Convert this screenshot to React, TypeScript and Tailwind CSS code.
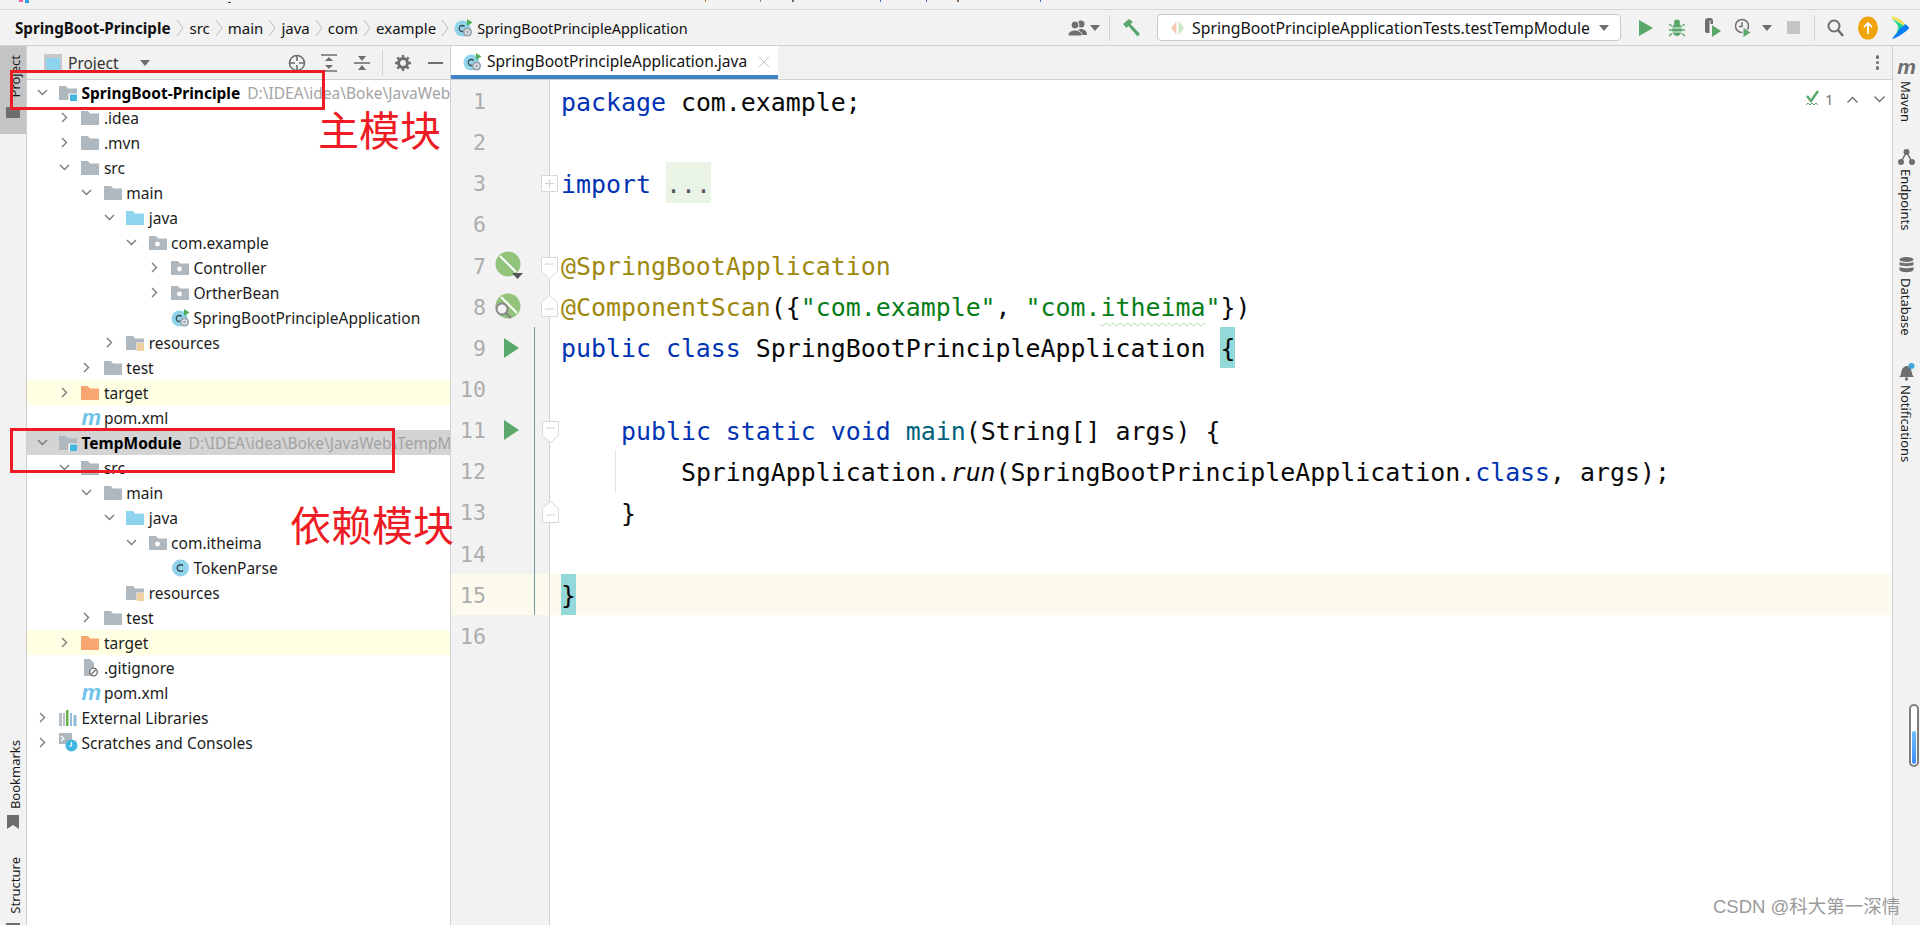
import type { ReactNode } from "react";

const uiFont = "font-['Noto_Sans','Noto_Sans_CJK_SC',sans-serif]";
const monoFont = "font-['DejaVu_Sans_Mono',monospace]";

function Folder({ color = "#afb8bf", children }: { color?: string; children?: ReactNode }) {
  return (
    <svg width="18" height="16" viewBox="0 0 18 16" className="shrink-0">
      <path d="M0 1h7l2 2.5h9V15H0z" fill={color} />
      {children}
    </svg>
  );
}

const ModuleFolder = () => (
  <Folder>
    <rect x="9.5" y="8.5" width="8.5" height="7.5" fill="#fff" />
    <rect x="11" y="9.5" width="7" height="6.5" fill="#40b6e0" />
  </Folder>
);

const PackageFolder = () => (
  <Folder>
    <circle cx="8.5" cy="9" r="2.4" fill="#fff" />
  </Folder>
);

const ResourceFolder = () => (
  <Folder>
    <rect x="10.5" y="7.5" width="7.5" height="9" fill="#fff" />
    <path d="M11 9h7M11 11h7M11 13h7M11 15h7" stroke="#e0a040" strokeWidth="1.2" />
  </Folder>
);

const ClassIcon = () => (
  <svg width="19" height="18" viewBox="0 0 18 18" className="shrink-0">
    <circle cx="9" cy="9" r="8.5" fill="#8fd4ea" />
    <path d="M11.5 6.8a3.3 3.3 0 1 0 0 4.4" fill="none" stroke="#3c4a52" strokeWidth="1.4" />
  </svg>
);

const SpringAppIcon = () => (
  <svg width="19" height="18" viewBox="0 0 19 18" className="shrink-0">
    <circle cx="8.5" cy="9.5" r="8" fill="#8fd4ea" />
    <path d="M10.5 7.5a3 3 0 1 0 0 4" fill="none" stroke="#3c4a52" strokeWidth="1.3" />
    <path d="M13 0l5.5 3.5L13 7z" fill="#4fae55" />
    <circle cx="13.5" cy="13" r="4.6" fill="#9aa5ad" />
    <circle cx="13.5" cy="13" r="2.8" fill="#dfe4e7" />
    <circle cx="13.5" cy="13" r="1.3" fill="#9aa5ad" />
  </svg>
);

const PomIcon = () => (
  <span className="w-[18px] shrink-0 text-center font-['Liberation_Sans',sans-serif] text-[22px] leading-none font-bold text-[#6fc3e8] italic">m</span>
);

const GitignoreIcon = () => (
  <svg width="18" height="18" viewBox="0 0 18 18" className="shrink-0">
    <path d="M3 0h6l4 4v5H9v8H3z" fill="#afb8bf" />
    <circle cx="12.5" cy="13" r="3.8" fill="#fff" stroke="#6e6e6e" strokeWidth="1.3" />
    <path d="M10 15.5l5-5" stroke="#6e6e6e" strokeWidth="1.3" />
  </svg>
);

const LibrariesIcon = () => (
  <svg width="18" height="16" viewBox="0 0 18 16" className="shrink-0">
    <rect x="0" y="3" width="3" height="13" fill="#b8c0c6" />
    <rect x="4" y="3" width="2" height="13" fill="#b8c0c6" />
    <rect x="7" y="0" width="2.5" height="16" fill="#62b543" />
    <rect x="11" y="3" width="2" height="13" fill="#8fbcd8" />
    <rect x="14.5" y="5" width="3" height="11" fill="#8fbcd8" />
  </svg>
);

const ScratchIcon = () => (
  <svg width="19" height="19" viewBox="0 0 19 19" className="shrink-0">
    <rect x="0" y="0" width="13" height="11" fill="#afb8bf" />
    <path d="M2 3l3 2.5L2 8" fill="none" stroke="#fff" strokeWidth="1.2" />
    <circle cx="12.5" cy="12.5" r="6" fill="#40b6e0" />
    <path d="M12.5 9v4h-2.500" fill="none" stroke="#fff" strokeWidth="1.2" />
  </svg>
);

function Chevron({ open }: { open?: boolean }) {
  return (
    <svg width="11" height="11" viewBox="0 0 11 11" className="shrink-0">
      {open ? (
        <path d="M1 3l4.500 4.500L10 3" fill="none" stroke="#7a7a7a" strokeWidth="1.4" />
      ) : (
        <path d="M3 1l4.500 4.500L3 10" fill="none" stroke="#7a7a7a" strokeWidth="1.4" />
      )}
    </svg>
  );
}

type TreeItem = {
  level: number;
  label: string;
  icon: ReactNode;
  open?: boolean;
  hint?: string;
  bold?: boolean;
  bg?: string;
};

const treeItems: TreeItem[] = [
  { level: 0, label: "SpringBoot-Principle", icon: <ModuleFolder />, open: true, bold: true, hint: "D:\\IDEA\\idea\\Boke\\JavaWeb\\SpringBoot-Principle" },
  { level: 1, label: ".idea", icon: <Folder />, open: false },
  { level: 1, label: ".mvn", icon: <Folder />, open: false },
  { level: 1, label: "src", icon: <Folder />, open: true },
  { level: 2, label: "main", icon: <Folder />, open: true },
  { level: 3, label: "java", icon: <Folder color="#8fd4ee" />, open: true },
  { level: 4, label: "com.example", icon: <PackageFolder />, open: true },
  { level: 5, label: "Controller", icon: <PackageFolder />, open: false },
  { level: 5, label: "OrtherBean", icon: <PackageFolder />, open: false },
  { level: 5, label: "SpringBootPrincipleApplication", icon: <SpringAppIcon /> },
  { level: 3, label: "resources", icon: <ResourceFolder />, open: false },
  { level: 2, label: "test", icon: <Folder />, open: false },
  { level: 1, label: "target", icon: <Folder color="#f7a672" />, open: false, bg: "bg-[#ffffe4]" },
  { level: 1, label: "pom.xml", icon: <PomIcon /> },
  { level: 0, label: "TempModule", icon: <ModuleFolder />, open: true, bold: true, bg: "bg-[#d4d4d4]", hint: "D:\\IDEA\\idea\\Boke\\JavaWeb\\TempModule" },
  { level: 1, label: "src", icon: <Folder />, open: true },
  { level: 2, label: "main", icon: <Folder />, open: true },
  { level: 3, label: "java", icon: <Folder color="#8fd4ee" />, open: true },
  { level: 4, label: "com.itheima", icon: <PackageFolder />, open: true },
  { level: 5, label: "TokenParse", icon: <ClassIcon /> },
  { level: 3, label: "resources", icon: <ResourceFolder /> },
  { level: 2, label: "test", icon: <Folder />, open: false },
  { level: 1, label: "target", icon: <Folder color="#f7a672" />, open: false, bg: "bg-[#ffffe4]" },
  { level: 1, label: ".gitignore", icon: <GitignoreIcon /> },
  { level: 1, label: "pom.xml", icon: <PomIcon /> },
  { level: 0, label: "External Libraries", icon: <LibrariesIcon />, open: false },
  { level: 0, label: "Scratches and Consoles", icon: <ScratchIcon />, open: false },
];

function TreeRow({ item }: { item: TreeItem }) {
  return (
    <div
      className={`flex h-[25px] items-center whitespace-nowrap ${item.bg ?? ""}`}
      style={{ paddingLeft: 9.5 + item.level * 22.4 }}
    >
      <span className="flex w-[22.5px] shrink-0">{item.open !== undefined && <Chevron open={item.open} />}</span>
      <span className="flex w-[22.5px] shrink-0">{item.icon}</span>
      <span className={`pt-[2px] text-[15.5px] text-[#1c1c1c] ${item.bold ? "font-bold text-black" : ""}`}>{item.label}</span>
      {item.hint && <span className="ml-[7px] pt-[2px] text-[15.5px] text-[#a3a3a3]">{item.hint}</span>}
    </div>
  );
}

const Crumb = ({ label, bold }: { label: string; bold?: boolean }) => (
  <>
    <span className={`pt-[2px] text-[#111] ${bold ? "text-[15.2px] font-bold" : "text-[15px]"}`}>{label}</span>
    <svg width="8" height="18" viewBox="0 0 8 18" className={`shrink-0 ${bold ? "mx-[5.5px]" : "mx-[5px]"}`}>
      <path d="M1 1l6 8-6 8" fill="none" stroke="#bdbdbd" strokeWidth="1" />
    </svg>
  </>
);

const Caret = () => (
  <svg width="10" height="6" viewBox="0 0 10 6" className="shrink-0">
    <path d="M0 0h10L5 6z" fill="#6e6e6e" />
  </svg>
);

function Toolbar() {
  return (
    <div className="flex h-[35px] items-center">
      <svg width="19" height="16" viewBox="0 0 19 16" className="shrink-0">
        <circle cx="13" cy="4" r="3.5" fill="#6e6e6e" />
        <path d="M8 15c0-4 2-6 5-6s6 2 6 6z" fill="#6e6e6e" />
        <circle cx="7" cy="5" r="4" fill="#6e6e6e" stroke="#f2f2f2" />
        <path d="M0 16c0-4 3-6 7-6s7 2 7 6z" fill="#6e6e6e" stroke="#f2f2f2" />
      </svg>
      <span className="ml-[3px]"><Caret /></span>
      <div className="ml-[9px] h-[26px] w-px bg-[#d1d1d1]" />
      <svg width="20" height="20" viewBox="0 0 20 20" className="ml-[12px] shrink-0">
        <path d="M1 6l6-5 4 3-2.500 2L18 16l-2.500 2.500L6.500 8 4.500 10z" fill="#59a869" />
      </svg>
      <div className="ml-[15px] flex h-[27px] w-[464px] items-center rounded-[4px] border border-[#c9c9c9] bg-white pl-[12px]">
        <svg width="15" height="18" viewBox="0 0 15 18" className="shrink-0">
          <path d="M6.500 2L1 9l5.500 7z" fill="#f8c9b8" />
          <path d="M8.500 2L14 9l-5.500 7z" fill="#c8e6c0" />
        </svg>
        <span className="ml-[7px] w-[407px] pt-[2px] text-[15.8px] whitespace-nowrap text-[#111]">SpringBootPrincipleApplicationTests.testTempModule</span>
        <Caret />
      </div>
      <svg width="14" height="16" viewBox="0 0 14 16" className="ml-[18px] shrink-0">
        <path d="M0 0l14 8-14 8z" fill="#59a869" />
      </svg>
      <svg width="16" height="18" viewBox="0 0 16 18" className="ml-[16px] shrink-0">
        <ellipse cx="8" cy="10.500" rx="5" ry="6.500" fill="#59a869" />
        <circle cx="8" cy="3.500" r="3" fill="#59a869" />
        <path d="M0 5l3 2M16 5l-3 2M0 11h3M16 11h-3M0 17l3-2.500M16 17l-3-2.500" stroke="#59a869" strokeWidth="1.4" />
        <path d="M3 9h10M3 13h10" stroke="#f2f2f2" strokeWidth="1" />
      </svg>
      <svg width="18" height="20" viewBox="0 0 18 20" className="ml-[18px] shrink-0">
        <path d="M2 3a3 3 0 0 1 3-3h2a3 3 0 0 1 3 3v3H7.500V2.500h-1V15H4a2 2 0 0 1-2-2z" fill="#6e6e6e" />
        <path d="M9 7l9 6-9 6z" fill="#59a869" />
      </svg>
      <svg width="18" height="20" viewBox="0 0 18 20" className="ml-[13px] shrink-0">
        <circle cx="8" cy="8" r="6.500" fill="none" stroke="#6e6e6e" strokeWidth="1.5" />
        <path d="M8 4v4.500H5" fill="none" stroke="#6e6e6e" strokeWidth="1.4" />
        <path d="M9 9l8 5.500L9 20z" fill="#59a869" stroke="#f2f2f2" />
      </svg>
      <span className="ml-[10px]"><Caret /></span>
      <div className="ml-[15px] h-[13px] w-[13px] bg-[#c4c4c4]" />
      <div className="ml-[14px] h-[26px] w-px bg-[#d1d1d1]" />
      <svg width="17" height="18" viewBox="0 0 17 18" className="ml-[12px] shrink-0">
        <circle cx="7" cy="7" r="5.500" fill="none" stroke="#6e6e6e" strokeWidth="2" />
        <path d="M11 11l5 6" stroke="#6e6e6e" strokeWidth="2.400" />
      </svg>
      <svg width="20" height="24" viewBox="0 0 20 24" className="ml-[14px] shrink-0">
        <ellipse cx="10" cy="12" rx="10" ry="11.500" fill="#f0a30a" />
        <path d="M10 18V7M6 11l4-4 4 4" fill="none" stroke="#fff" strokeWidth="1.8" />
      </svg>
      <svg width="20" height="26" viewBox="0 0 20 26" className="ml-[12px] shrink-0">
        <path d="M2 1c4 1 9 3 13 8v3C11 8 6 5 2 4z" fill="#f1e05a" />
        <path d="M2 4c5 2 10 5 13 8 2 2 2 2 0 3-4 4-8 7-13 9 4-5 6-8 6-12 0-3-3-5-6-8z" fill="#21d789" />
        <path d="M15 9c3 2 4 3 4 4s-2 2-4 4c-2 1-6 5-13 7 4-5 7-8 8-11 2-1 4-2 5-4z" fill="#087cfa" />
      </svg>
    </div>
  );
}

const kw = "text-[#0033b3]";
const ann = "text-[#9e880d]";
const str = "text-[#067d17]";

type Line = {
  no: number;
  code?: ReactNode;
  gutter?: ReactNode;
  fold?: ReactNode;
  vcs?: boolean;
  active?: boolean;
};

const Triangle = () => (
  <svg width="15" height="20" viewBox="0 0 15 20" className="ml-[18px]">
    <path d="M0 0l15 10L0 20z" fill="#59a869" />
  </svg>
);

const FoldDown = () => (
  <svg width="17" height="22" viewBox="0 0 17 22" className="absolute top-[12px] left-[-8px]">
    <path d="M.5.5h16v14l-8 7-8-7z" fill="#fff" stroke="#d8d8d8" />
    <path d="M4 7h9" stroke="#d0d0d0" />
  </svg>
);

const FoldUp = () => (
  <svg width="17" height="22" viewBox="0 0 17 22" className="absolute top-[9px] left-[-8px]">
    <path d="M.5 21.500h16v-14l-8-7-8 7z" fill="#fff" stroke="#d8d8d8" />
    <path d="M4 14h9" stroke="#d0d0d0" />
  </svg>
);

const FoldPlus = () => (
  <svg width="17" height="17" viewBox="0 0 17 17" className="absolute top-[13px] left-[-8px]">
    <path d="M.5.5h16v16H.5z" fill="#fff" stroke="#d8d8d8" />
    <path d="M4 8.500h9M8.500 4v9" stroke="#d0d0d0" />
  </svg>
);

// full-height background behind one token, text nudged back onto the shifted baseline
const Mark = ({ bg, children }: { bg: string; children: string }) => (
  <span className={`relative top-[-1.5px] inline-block h-[41px] ${bg}`}>
    <span className="relative top-[1.5px]">{children}</span>
  </span>
);

const lines: Line[] = [
  { no: 1, code: <><span className={kw}>package</span> com.example;</> },
  { no: 2 },
  {
    no: 3,
    fold: <FoldPlus />,
    code: <><span className={kw}>import</span> <Mark bg="bg-[#e9f3e6] text-[#5a5a5a]">...</Mark></>,
  },
  { no: 6 },
  {
    no: 7,
    fold: <FoldDown />,
    gutter: (
      <svg width="28" height="28" viewBox="0 0 28 28" className="ml-[9px]">
        <circle cx="13" cy="13" r="12.500" fill="#93c47d" />
        <path d="M5 5l16 16" stroke="#fff" strokeWidth="2" />
        <path d="M17 22h11l-5.500 6z" fill="#555" />
      </svg>
    ),
    code: <span className={ann}>@SpringBootApplication</span>,
  },
  {
    no: 8,
    fold: <FoldUp />,
    gutter: (
      <svg width="26" height="26" viewBox="0 0 26 26" className="ml-[9px]">
        <circle cx="13" cy="13" r="12.500" fill="#93c47d" />
        <path d="M6 4l16 16" stroke="#fff" strokeWidth="2" />
        <circle cx="7" cy="16" r="5.500" fill="#f2f2f2" stroke="#888" strokeWidth="2" />
        <path d="M11 20l5 5" stroke="#888" strokeWidth="2.400" />
      </svg>
    ),
    code: (
      <>
        <span className={ann}>@ComponentScan</span>({"{"}
        <span className={str}>"com.example"</span>, <span className={str}>"com.</span>
        <span className={`${str} underline decoration-[#a9d6a0] decoration-wavy decoration-1 underline-offset-[6px]`}>itheima</span>
        <span className={str}>"</span>{"})"}
      </>
    ),
  },
  {
    no: 9,
    vcs: true,
    gutter: <Triangle />,
    code: (
      <>
        <span className={kw}>public class</span> SpringBootPrincipleApplication <Mark bg="bg-[#93d9d9]">{"{"}</Mark>
      </>
    ),
  },
  { no: 10, vcs: true },
  {
    no: 11,
    vcs: true,
    gutter: <Triangle />,
    fold: <FoldDown />,
    code: (
      <>
        {"    "}
        <span className={kw}>public static void</span> <span className="text-[#00627a]">main</span>(String[] args) {"{"}
      </>
    ),
  },
  {
    no: 12,
    vcs: true,
    code: (
      <>
        <span className="absolute top-0 left-[54px] h-full w-px bg-[#e2e2e2]" />
        {"        "}SpringApplication.<span className="italic">run</span>(SpringBootPrincipleApplication.
        <span className={kw}>class</span>, args);
      </>
    ),
  },
  { no: 13, vcs: true, fold: <FoldUp />, code: <>{"    }"}</> },
  { no: 14, vcs: true },
  {
    no: 15,
    vcs: true,
    active: true,
    code: <Mark bg="bg-[#93d9d9]">{"}"}</Mark>,
  },
  { no: 16 },
];

function EditorLine({ line }: { line: Line }) {
  return (
    <div className={`flex h-[41.17px] ${line.active ? "bg-[#fcfaed]" : ""}`}>
      <div className={`flex w-[99px] shrink-0 items-center border-r border-[#d1d1d1] ${line.active ? "" : "bg-[#f2f2f2]"}`}>
        <span className={`${monoFont} w-[35px] pt-[3px] text-right text-[21.6px] text-[#adadad]`}>{line.no}</span>
        <span className="flex w-[48px] items-center">{line.gutter}</span>
        <span className={`relative h-full w-[15px] ${line.vcs ? "border-l border-[#6c9c9c]" : "pl-px"}`}>
          <span className="absolute top-0 left-[15px]">{line.fold}</span>
        </span>
      </div>
      <pre className={`${monoFont} relative ml-[11px] pt-[1.5px] text-[24.9px] leading-[41px] text-[#080808]`}>{line.code}</pre>
    </div>
  );
}

const StripeLabel = ({ children, flip, h }: { children: string; flip?: boolean; h: string }) => (
  <div className={`flex shrink-0 items-center justify-center ${h} ${flip ? "ml-[3px]" : "mr-[2px]"}`}>
    <span className={`text-[13px] leading-[20px] whitespace-nowrap text-[#1c1c1c] [writing-mode:vertical-rl] ${flip ? "rotate-180" : ""}`}>{children}</span>
  </div>
);

function LeftStripe() {
  return (
    <div className="flex w-[27px] shrink-0 flex-col items-center overflow-hidden border-r border-[#d1d1d1] bg-[#f2f2f2]">
      <div className="flex h-[88px] w-full shrink-0 flex-col items-center bg-[#c4c4c4] pt-[9px]">
        <StripeLabel flip h="h-[43px]">Project</StripeLabel>
        <div className="mt-[9px] h-[11px] w-[14px] bg-[#6e6e6e]" />
      </div>
      <div className="mt-[608px]">
        <StripeLabel flip h="h-[66px]">Bookmarks</StripeLabel>
      </div>
      <svg width="12" height="14" viewBox="0 0 12 14" className="mt-[7px] shrink-0">
        <path d="M0 0h12v14l-6-4-6 4z" fill="#6e6e6e" />
      </svg>
      <div className="mt-[28px]">
        <StripeLabel flip h="h-[57px]">Structure</StripeLabel>
      </div>
      <div className="mt-[9px] h-[6px] w-[14px] shrink-0 bg-[#6e6e6e]" />
    </div>
  );
}

function RightStripe() {
  return (
    <div className="flex w-[28px] shrink-0 flex-col items-center overflow-hidden border-l border-[#d1d1d1] bg-[#f2f2f2] pt-[12px]">
      <span className="h-[18px] font-['Liberation_Sans',sans-serif] text-[21px] leading-[18px] font-bold text-[#6e6e6e] italic">m</span>
      <div className="mt-[5px]"><StripeLabel h="h-[41px]">Maven</StripeLabel></div>
      <svg width="17" height="18" viewBox="0 0 17 18" className="mt-[26px] shrink-0">
        <path d="M3 14L8.500 4 14 14" fill="none" stroke="#6e6e6e" strokeWidth="1.5" />
        <circle cx="8.500" cy="4" r="3" fill="#6e6e6e" />
        <circle cx="3" cy="14" r="3" fill="#6e6e6e" />
        <circle cx="14" cy="14" r="3" fill="#6e6e6e" />
      </svg>
      <div className="mt-[4px]"><StripeLabel h="h-[60px]">Endpoints</StripeLabel></div>
      <svg width="15" height="16" viewBox="0 0 15 16" className="mt-[27px] shrink-0">
        <ellipse cx="7.500" cy="2.500" rx="7" ry="2.500" fill="#6e6e6e" />
        <path d="M.5 5c2 1.500 12 1.500 14 0v3c-2 1.500-12 1.500-14 0zM.5 10c2 1.500 12 1.500 14 0v3c-2 3-12 3-14 0z" fill="#6e6e6e" />
      </svg>
      <div className="mt-[5px]"><StripeLabel h="h-[57px]">Database</StripeLabel></div>
      <svg width="16" height="18" viewBox="0 0 16 18" className="mt-[28px] shrink-0">
        <path d="M0 14c2-1 2-3 2.500-6S6 3 8 3s4 2 4.500 5 1 5 2.500 6z" fill="#6e6e6e" />
        <circle cx="7.500" cy="16" r="1.700" fill="#6e6e6e" />
        <circle cx="12.500" cy="3" r="3" fill="#40a6e0" />
      </svg>
      <div className="mt-[4px]"><StripeLabel h="h-[78px]">Notifications</StripeLabel></div>
    </div>
  );
}

export default function App() {
  return (
    <div className={`${uiFont} relative flex h-[925px] w-[1920px] flex-col overflow-hidden bg-white`}>
      <div className="relative h-[10px] border-b border-[#d6d6d6] bg-[#f2f2f2]">
        {/* bottom edge of the cropped window title */}
        <span className="absolute top-0 left-[19px] h-[2px] w-[4px] bg-[#f25ba0]" />
        <span className="absolute top-0 left-[25px] h-[3px] w-[4px] bg-[#2f9de8]" />
        <span className="absolute top-0 left-[228px] h-[3px] w-[3px] rounded-b-full border-b border-black" />
        <span className="absolute top-0 left-[705px] h-[2px] w-px bg-[#b07a2a]" />
        <span className="absolute top-0 left-[760px] h-[2px] w-px bg-[#888]" />
        <span className="absolute top-0 left-[792px] h-[2px] w-[2px] bg-[#667]" />
        <span className="absolute top-0 left-[880px] h-[2px] w-px bg-[#3b6fb0]" />
        <span className="absolute top-0 left-[926px] h-[2px] w-px bg-[#3b6fb0]" />
        <span className="absolute top-0 left-[957px] h-[2px] w-[2px] bg-[#8a6a50]" />
        <span className="absolute top-0 left-[1040px] h-[2px] w-px bg-[#3b6fb0]" />
      </div>
      <div className="flex h-[36px] items-center border-b border-[#d1d1d1] bg-[#f2f2f2] pr-[10px] pl-[15px] whitespace-nowrap">
        <Crumb label="SpringBoot-Principle" bold />
        <Crumb label="src" />
        <Crumb label="main" />
        <Crumb label="java" />
        <Crumb label="com" />
        <Crumb label="example" />
        <SpringAppIcon />
        <span className="ml-[4px] pt-[2px] text-[14.4px] text-[#111]">SpringBootPrincipleApplication</span>
        <div className="ml-auto"><Toolbar /></div>
      </div>

      <div className="flex min-h-0 flex-1">
        <LeftStripe />

        <div className="flex w-[424px] shrink-0 flex-col overflow-hidden border-r border-[#d1d1d1]">
          <div className="flex h-[34px] shrink-0 items-center border-b border-[#d1d1d1] bg-[#f2f2f2] pl-[17px]">
            <svg width="18" height="18" viewBox="0 0 18 18" className="shrink-0">
              <rect width="18" height="18" fill="#c8c8c8" />
              <rect x="2" y="4" width="14" height="12" fill="#8fd4ee" />
            </svg>
            <span className="ml-[6px] w-[72px] pt-[3px] text-[15.5px] text-[#333]">Project</span>
            <Caret />
            <svg width="18" height="18" viewBox="0 0 18 18" className="ml-[138px] shrink-0">
              <circle cx="9" cy="9" r="7.500" fill="none" stroke="#6e6e6e" strokeWidth="1.600" />
              <path d="M9 1v6M9 11v6M1 9h6M11 9h6" stroke="#6e6e6e" strokeWidth="1.600" />
            </svg>
            <svg width="16" height="18" viewBox="0 0 16 18" className="ml-[15px] shrink-0">
              <path d="M0 1h16M0 17h16" stroke="#6e6e6e" strokeWidth="1.600" />
              <path d="M8 3l4 4H4zM8 15l4-4H4z" fill="#6e6e6e" />
            </svg>
            <svg width="16" height="18" viewBox="0 0 16 18" className="ml-[17px] shrink-0">
              <path d="M0 9h16" stroke="#6e6e6e" strokeWidth="1.600" />
              <path d="M8 7l4-5H4zM8 11l4 5H4z" fill="#6e6e6e" />
            </svg>
            <div className="ml-[12px] h-[26px] w-px bg-[#d1d1d1]" />
            <svg width="16" height="16" viewBox="0 0 16 16" className="ml-[12px] shrink-0">
              <circle cx="8" cy="8" r="4.500" fill="none" stroke="#6e6e6e" strokeWidth="3" />
              <path d="M8 0v3M8 13v3M0 8h3M13 8h3M2.300 2.300l2 2M11.700 11.700l2 2M13.700 2.300l-2 2M4.300 11.700l-2 2" stroke="#6e6e6e" strokeWidth="2.400" />
            </svg>
            <div className="ml-[17px] h-[2px] w-[15px] bg-[#6e6e6e]" />
          </div>
          <div className="flex-1 bg-white">
            {treeItems.map((item, i) => (
              <TreeRow key={i} item={item} />
            ))}
          </div>
        </div>

        <div className="relative flex min-w-0 flex-1 flex-col overflow-hidden">
          <div className="flex h-[34px] shrink-0 border-b border-[#d1d1d1] bg-[#f2f2f2]">
            <div className="flex w-[327px] items-center border-b-4 border-[#4083c9] bg-white pt-[3px] pl-[12px]">
              <SpringAppIcon />
              <span className="ml-[5px] text-[15.5px] whitespace-nowrap text-[#111]">SpringBootPrincipleApplication.java</span>
              <svg width="10" height="10" viewBox="0 0 10 10" className="ml-[12px] shrink-0">
                <path d="M0 0l10 10M10 0L0 10" stroke="#c4c4c4" strokeWidth="1" />
              </svg>
            </div>
            <div className="ml-auto flex flex-col items-center gap-[2px] self-center pr-[13px]">
              <span className="size-[3.500px] rounded-full bg-[#6e6e6e]" />
              <span className="size-[3.500px] rounded-full bg-[#6e6e6e]" />
              <span className="size-[3.500px] rounded-full bg-[#6e6e6e]" />
            </div>
          </div>
          {lines.map((line) => (
            <EditorLine key={line.no} line={line} />
          ))}
          <div className="w-[99px] flex-1 border-r border-[#d1d1d1] bg-[#f2f2f2]" />

          <div className="absolute top-[42px] right-[7px] flex items-center">
            <svg width="16" height="18" viewBox="0 0 16 18">
              <path d="M1 6l4 5 7-10" fill="none" stroke="#59a869" strokeWidth="2.400" />
              <path d="M0 15l2-2 2 2 2-2 2 2 2-2 2 2" fill="none" stroke="#59a869" strokeWidth="1" />
            </svg>
            <span className="ml-[3px] w-[22px] text-[15px] text-[#777]">1</span>
            <svg width="11" height="7" viewBox="0 0 11 7"><path d="M.5 6.500l5-5 5 5" fill="none" stroke="#6e6e6e" strokeWidth="1.300" /></svg>
            <svg width="11" height="7" viewBox="0 0 11 7" className="ml-[16px]"><path d="M.5.500l5 5 5-5" fill="none" stroke="#6e6e6e" strokeWidth="1.300" /></svg>
          </div>
        </div>

        <RightStripe />
      </div>

      <div className="absolute top-[70px] left-[10px] h-[40px] w-[315px] border-[3px] border-[#ed1c24]" />
      <div className="absolute top-[428px] left-[10px] h-[45px] w-[385px] border-[3px] border-[#ed1c24]" />
      <span className="absolute top-[100px] left-[318px] text-[41px] leading-[60px] text-[#ed1c24]">主模块</span>
      <span className="absolute top-[495px] left-[290px] text-[41px] leading-[60px] text-[#ed1c24]">依赖模块</span>

      <div className="absolute top-[704px] left-[1909px] flex h-[63px] w-[10px] flex-col justify-end rounded-full border-2 border-[#7f7f7f] bg-white p-px">
        <div className="h-[33px] w-full rounded-full bg-gradient-to-b from-[#6ec0ff] to-[#3f8cff]" />
      </div>
      <span className="absolute top-[895px] left-[1713px] font-['Liberation_Sans','Noto_Sans_CJK_SC',sans-serif] text-[18.500px] leading-[24px] whitespace-nowrap text-[#9a9a9a]">CSDN @科大第一深情</span>
    </div>
  );
}
